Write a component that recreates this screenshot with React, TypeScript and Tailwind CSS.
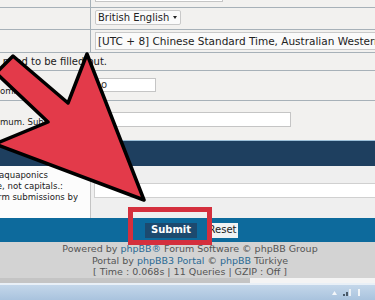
import React from "react";

const line = "border-[#a7b1b8]";
const labelFont = "font-['DejaVu_Sans_Condensed','Liberation_Sans',sans-serif] text-[9.5px]";

export default function App() {
  return (
    <div className="relative w-[375px] h-[300px] overflow-hidden bg-[#f2f1ef] text-[10px] leading-none text-[#1a1a1a] font-['DejaVu_Sans','Verdana',sans-serif]">
      {/* Row 1 */}
      <div className={`flex h-[8px] border-b ${line}`}>
        <div className={`w-[91px] shrink-0 border-r ${line}`} />
        <div className="pl-[4px]">
          <div className="mt-[-12px] h-[14px] w-[128px] bg-white border border-[#c5c5c5]" />
        </div>
      </div>
      {/* Row 2 */}
      <div className={`flex h-[22px] border-b ${line}`}>
        <div className={`w-[91px] shrink-0 border-r ${line}`} />
        <div className="pl-[4px] pt-[2px]">
          <div className="flex items-center justify-between h-[15px] w-[86px] bg-[#fafafa] border border-[#c9c9c9] rounded-[2px] pl-[2px] pr-[3px] text-[#222]">
            <span>British English</span>
            <svg width="4" height="3" viewBox="0 0 4 3">
              <path d="M0 0 L4 0 L2 3 Z" fill="#222" />
            </svg>
          </div>
        </div>
      </div>
      {/* Row 3 */}
      <div className={`flex h-[23px] border-b ${line}`}>
        <div className={`w-[91px] shrink-0 border-r ${line}`} />
        <div className="pl-[4px] pt-[2px] flex-1 min-w-0">
          <div className="flex items-center h-[18px] w-[300px] bg-[#fafafa] border border-[#c9c9c9] pl-[2px] whitespace-nowrap overflow-hidden text-[10.5px] text-[#222]">
            [UTC + 8] Chinese Standard Time, Australian Western Standard Time
          </div>
        </div>
      </div>
      {/* Row 4 */}
      <div className={`flex items-center h-[18px] border-b ${line}`}>
        <div className="w-[107px] flex justify-end overflow-hidden whitespace-nowrap">
          <span>Items marked with * need to be filled out.</span>
        </div>
      </div>
      {/* Row 5 */}
      <div className={`flex h-[30px] border-b ${line}`}>
        <div className={`w-[91px] shrink-0 border-r ${line} flex items-end pb-[5px] overflow-hidden whitespace-nowrap ${labelFont}`}>
          <span>omics:</span>
        </div>
        <div className="pl-[3px] pt-[7px]">
          <div className="h-[14px] w-[62px] bg-white border border-[#c5c5c5] flex items-center pl-[6px] text-[#333]">
            o
          </div>
        </div>
      </div>
      {/* Row 6 */}
      <div className="flex h-[39px]">
        <div className={`w-[91px] shrink-0 border-r ${line} flex items-center pt-[3px] overflow-hidden whitespace-nowrap ${labelFont}`}>
          <span>mum. Subject length</span>
        </div>
        <div className="pl-[3px] pt-[11px]">
          <div className="h-[15px] w-[197px] bg-white border border-[#c5c5c5]" />
        </div>
      </div>
      {/* Dark band */}
      <div className="h-[26px] bg-[#1e3f5f] border-t border-[#9cc0d9]" />
      {/* Row 7 */}
      <div className="flex h-[52px]">
        <div className={`w-[91px] shrink-0 bg-[#fcfcfc] border-r border-[#c4c4c4] pt-[3px] leading-[11px] whitespace-nowrap ${labelFont}`}>
          <div className="w-[48px] flex justify-end overflow-hidden">
            <span>Do you like aquaponics</span>
          </div>
          <div className="w-[63px] flex justify-end overflow-hidden">
            <span>Use lowercase, not capitals.:</span>
          </div>
          <div className="w-[78px] flex justify-end overflow-hidden">
            <span>Prevents automated form submissions by</span>
          </div>
        </div>
        <div className="flex-1 bg-[#efefef] pl-[3px] pt-[17px]">
          <div className="h-[15px] w-full bg-white border-y border-l border-[#d0d0d0]" />
        </div>
      </div>
      {/* Button bar */}
      <div className="flex items-center justify-center gap-[10px] h-[24px] pl-[8px] bg-[#0d6a9c]">
        <div className="flex items-center justify-center w-[52px] h-[15px] bg-[#1c4a6f] text-white font-bold">
          Submit
        </div>
        <div className="flex items-center justify-center w-[31px] h-[15px] bg-[#f1f2f3] text-[#222]">
          Reset
        </div>
      </div>
      {/* Footer */}
      <div className="h-[36px] bg-[#d3d3d3] pt-[1px] pl-[5px] text-center text-[9.5px] leading-[11.5px] text-[#555]">
        <div>
          Powered by <span className="text-[#2b6a94]">phpBB®</span> Forum Software © phpBB Group
        </div>
        <div>
          Portal by <span className="text-[#2b6a94]">phpBB3 Portal</span> © <span className="text-[#2b6a94]">phpBB</span> Türkiye
        </div>
        <div>[ Time : 0.068s | 11 Queries | GZIP : Off ]</div>
      </div>
      {/* Scrollbar */}
      <div className="flex h-[5px]">
        <div className="w-[250px] bg-[#c4c4c4]" />
        <div className="flex-1 bg-[#f4f4f4]" />
      </div>
      <div className="h-[2px] bg-[#e9f0f7]" />
      {/* Taskbar */}
      <div className="flex items-center justify-end gap-[6px] pr-[6px] h-[15px] bg-gradient-to-b from-[#c4d7ea] to-[#a9c3de]">
        <svg width="5" height="4" viewBox="0 0 5 4">
          <path d="M0 4 L2.5 0 L5 4 Z" fill="#f4f7fa" />
        </svg>
        <svg width="8" height="7" viewBox="0 0 8 7">
          <rect x="0" y="5" width="2" height="2" fill="#4a5a6a" />
          <rect x="3" y="3" width="2" height="4" fill="#4a5a6a" />
          <rect x="6" y="0" width="2" height="7" fill="#e8eef4" />
        </svg>
        <svg width="4" height="7" viewBox="0 0 4 7">
          <rect x="1" y="0" width="2" height="7" fill="#f2f5f8" />
        </svg>
        <div className="w-[2px]" />
      </div>

      {/* Red box annotation */}
      <div className="absolute left-[128px] top-[207px] w-[84px] h-[38px] border-[5px] border-[#d42f3d]" />

      {/* Big red arrow annotation */}
      <svg className="absolute left-0 top-0 pointer-events-none" width="375" height="300" viewBox="0 0 375 300">
        <path
          d="M -4 73 L 13 56 L 68 103 L 87 54 L 144 200 L -5 144 L 48 122 Z"
          fill="#e33a4a"
          stroke="#000"
          strokeWidth="3.5"
          strokeLinejoin="round"
        />
      </svg>
    </div>
  );
}
